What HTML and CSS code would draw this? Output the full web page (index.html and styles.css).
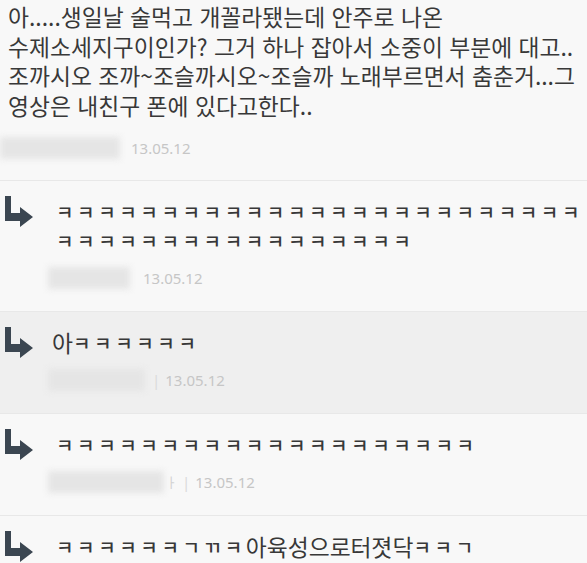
FILE: index.html
```html
<!DOCTYPE html>
<html lang="ko">
<head>
  <meta charset="UTF-8">
  <title>댓글</title>
  <link rel="stylesheet" href="styles.css">
</head>
<body>
  <div class="comment">
    <p class="comment-text">아.....생일날 술먹고 개꼴라됐는데 안주로 나온<br>수제소세지구이인가? 그거 하나 잡아서 소중이 부분에 대고..<br>조까시오 조까~조슬까시오~조슬까 노래부르면서 춤춘거...그<br>영상은 내친구 폰에 있다고한다..</p>
    <div class="meta meta-main">
      <span class="nick nick-main"></span>
      <span class="date">13.05.12</span>
    </div>
  </div>

  <div class="reply">
    <svg class="reply-icon" viewBox="0 0 28 31"><path d="M0 0H6V17H15V11L28 21L15 31V25H0Z"/></svg>
    <div class="reply-body">
      <p class="reply-text"><span class="jamo">ㅋㅋㅋㅋㅋㅋㅋㅋㅋㅋㅋㅋㅋㅋㅋㅋㅋㅋㅋㅋㅋㅋㅋㅋㅋ</span><br><span class="jamo">ㅋㅋㅋㅋㅋㅋㅋㅋㅋㅋㅋㅋㅋㅋㅋㅋㅋ</span></p>
      <div class="meta">
        <span class="nick" style="width: 82px"></span>
        <span class="date">13.05.12</span>
      </div>
    </div>
  </div>

  <div class="reply reply-grey">
    <svg class="reply-icon" viewBox="0 0 28 31"><path d="M0 0H6V17H15V11L28 21L15 31V25H0Z"/></svg>
    <div class="reply-body">
      <p class="reply-text reply-short">아<span class="jamo">ㅋㅋㅋㅋㅋㅋ</span></p>
      <div class="meta">
        <span class="nick" style="width: 97px"></span>
        <span class="bar">|</span>
        <span class="date">13.05.12</span>
      </div>
    </div>
  </div>

  <div class="reply">
    <svg class="reply-icon" viewBox="0 0 28 31"><path d="M0 0H6V17H15V11L28 21L15 31V25H0Z"/></svg>
    <div class="reply-body">
      <p class="reply-text"><span class="jamo">ㅋㅋㅋㅋㅋㅋㅋㅋㅋㅋㅋㅋㅋㅋㅋㅋㅋㅋㅋㅋ</span></p>
      <div class="meta">
        <span class="nick" style="width: 116px"></span>
        <span class="nick-end">ㅏ</span>
        <span class="bar">|</span>
        <span class="date">13.05.12</span>
      </div>
    </div>
  </div>

  <div class="reply reply-last">
    <svg class="reply-icon" viewBox="0 0 28 31"><path d="M0 0H6V17H15V11L28 21L15 31V25H0Z"/></svg>
    <div class="reply-body">
      <p class="reply-text"><span class="jamo">ㅋㅋㅋㅋㅋㅋㄱㄲㅋ</span>아육성으로터졋닥<span class="jamo">ㅋㅋㄱ</span></p>
    </div>
  </div>
</body>
</html>
```

FILE: styles.css
```css
body {
  margin: 0;
  background-color: #f8f8f8;
  font-family: "Noto Sans CJK KR", "Noto Sans", sans-serif;
  color: #383838;
  overflow: hidden;
}

p {
  margin: 0;
}

.comment {
  padding: 2px 8px 20px;
  border-bottom: 1px solid #e8e8e8;
}

.comment-text {
  font-size: 22.8px;
  line-height: 29.5px;
  white-space: nowrap;
}

.meta {
  display: flex;
  align-items: center;
  height: 24px;
  margin-top: 11px;
  font-family: "Noto Sans", sans-serif;
  font-size: 15px;
  color: #c6c6c6;
}

.comment .meta {
  margin-top: 16px;
}

.meta-main {
  margin-left: -8px;
}

.nick {
  display: inline-block;
  height: 22px;
  background-color: #e5e5e5;
  filter: blur(3px);
  margin-left: -8px;
  margin-right: 13px;
}

.nick-main {
  width: 120px;
  margin-left: 0;
  margin-right: 11px;
}

.nick-end {
  color: #d2d2d2;
  margin-left: -13px;
  margin-right: 9px;
}

.bar {
  color: #dadada;
  margin-left: -6px;
  margin-right: 5px;
}

.reply {
  display: flex;
  padding: 15px 0 21px 5px;
  border-bottom: 1px solid #e8e8e8;
}

.reply-grey {
  background-color: #efefef;
}

.reply-last {
  border-bottom: none;
}

.reply-icon {
  width: 28px;
  height: 31px;
  flex-shrink: 0;
  fill: #3b4651;
  margin-right: 23px;
}

.reply-body {
  padding-top: 1px;
}

.reply-text {
  font-size: 22.8px;
  line-height: 29px;
  white-space: nowrap;
}

.reply-short {
  margin-left: -4px;
}

.jamo {
  font-size: 19px;
  line-height: 1;
  letter-spacing: 3.6px;
  vertical-align: 1px;
  font-weight: 500;
}
```
